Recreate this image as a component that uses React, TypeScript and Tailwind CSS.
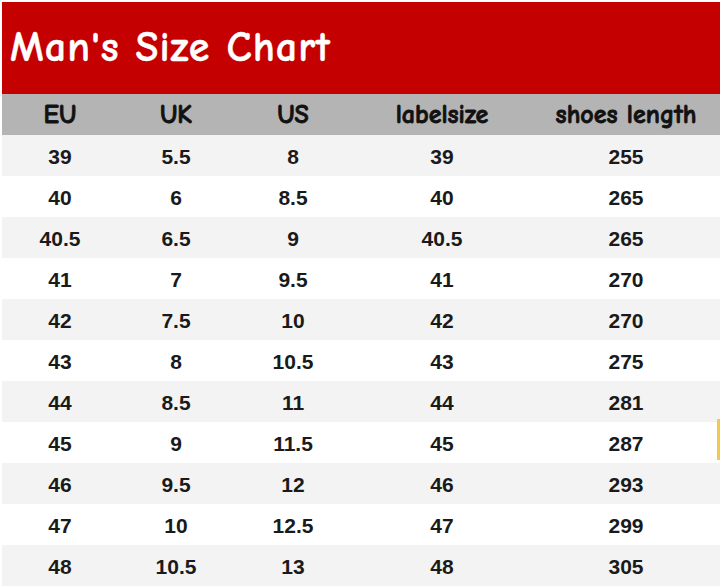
import React from "react";

const rows: string[][] = [
  ["39", "5.5", "8", "39", "255"],
  ["40", "6", "8.5", "40", "265"],
  ["40.5", "6.5", "9", "40.5", "265"],
  ["41", "7", "9.5", "41", "270"],
  ["42", "7.5", "10", "42", "270"],
  ["43", "8", "10.5", "43", "275"],
  ["44", "8.5", "11", "44", "281"],
  ["45", "9", "11.5", "45", "287"],
  ["46", "9.5", "12", "46", "293"],
  ["47", "10", "12.5", "47", "299"],
  ["48", "10.5", "13", "48", "305"],
];

const headers = ["EU", "UK", "US", "labelsize", "shoes length"];
const grid = "grid grid-cols-[116px_116px_118px_180px_188px]";
const comic = "font-['Comic_Sans_MS','Comic_Neue','Noto_Sans',sans-serif]";

export default function App() {
  return (
    <div className="w-[720px] h-[588px] bg-white pl-[2px] pt-[2px] overflow-hidden">
      <div className="h-[92px] bg-[#c40000] flex items-center pl-[8px] pb-[2px]">
        <h1
          className={`${comic} text-white font-bold text-[42px] tracking-[1px] [-webkit-text-stroke:0.4px_#ffffff]`}
        >
          Man's Size Chart
        </h1>
      </div>
      <div className={`${grid} h-[41px] bg-[#b4b4b4] items-center`}>
        {headers.map((h) => (
          <div
            key={h}
            className={`${comic} text-center font-bold text-[26px] text-[#111] pt-[1px] [-webkit-text-stroke:0.8px_#111111]`}
          >
            {h}
          </div>
        ))}
      </div>
      {rows.map((r, i) => (
        <div
          key={i}
          className={`${grid} relative h-[41px] items-center pt-[3px] ${i % 2 === 0 ? "bg-[#f3f3f3]" : "bg-white"}`}
        >
          {r.map((c, j) => (
            <div
              key={j}
              className="text-center font-bold text-[21px] text-[#1a1a1a] font-['Liberation_Sans',Arial,sans-serif]"
            >
              {c}
            </div>
          ))}
          {i === 7 && (
            <div className="absolute right-0 top-[-3px] h-[41px] w-[3px] bg-[#f2c94c]" />
          )}
        </div>
      ))}
    </div>
  );
}
